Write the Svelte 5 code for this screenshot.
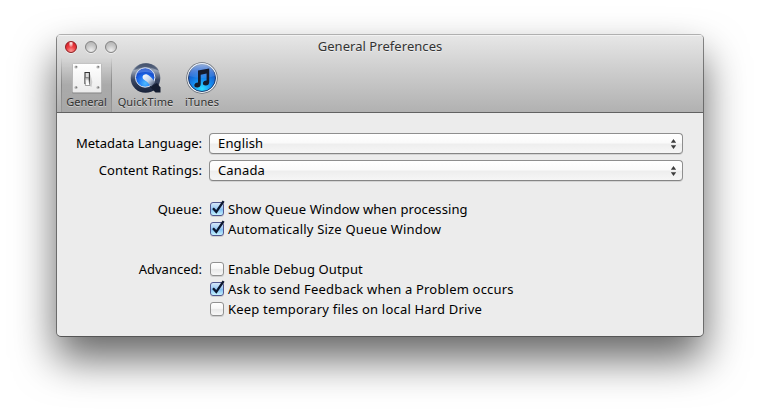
<script lang="ts">
	const popups = [
		{ label: "Metadata Language:", value: "English", tracking: 0 },
		{ label: "Content Ratings:", value: "Canada", tracking: 0.12 },
	];

	let groups = $state([
		{
			label: "Queue:",
			options: [
				{ text: "Show Queue Window when processing", tracking: 0.09, checked: true },
				{ text: "Automatically Size Queue Window", tracking: 0.18, checked: true },
			],
		},
		{
			label: "Advanced:",
			options: [
				{ text: "Enable Debug Output", tracking: 0.13, checked: false },
				{ text: "Ask to send Feedback when a Problem occurs", tracking: 0.19, checked: true },
				{ text: "Keep temporary files on local Hard Drive", tracking: 0.19, checked: false },
			],
		},
	]);

	let active = $state("General");
</script>

<div class="desktop">
	<div class="window">
		<header>
			<div class="titlebar">
				<div class="lights">
					<span class="light close"></span>
					<span class="light"></span>
					<span class="light"></span>
				</div>
				<h1>General Preferences</h1>
			</div>

			<nav>
				<button class="tool general" class:active={active === "General"} onclick={() => (active = "General")}>
					<svg width="32" height="32" viewBox="0 0 32 32">
						<defs>
							<linearGradient id="plate" x2="0" y2="1">
								<stop offset="0" stop-color="#fff" />
								<stop offset="1" stop-color="#ebebeb" />
							</linearGradient>
							<linearGradient id="lever" x2="0" y2="1">
								<stop offset="0" stop-color="#999" />
								<stop offset=".4" stop-color="#f4f4f4" />
								<stop offset="1" stop-color="#fff" />
							</linearGradient>
						</defs>
						<rect x="1" y="2" width="30" height="29.5" rx="1" fill="#777" opacity=".65" />
						<rect x="1.5" y="1.5" width="29" height="29" rx=".8" fill="url(#plate)" stroke="#b5b5b5" stroke-width=".7" />
						{#each [[5, 5], [27, 5], [5, 25.5], [27, 25.5]] as [x, y]}
							<circle cx={x} cy={y} r="1.6" fill="#b8b8b8" />
							<circle cx={x + 0.4} cy={y - 0.3} r=".8" fill="#777" />
						{/each}
						<path d="M17 23l3.5 2 .8-5-2-8z" fill="#999" opacity=".4" />
						<path d="M14 10.5h4.4v11H14z" fill="#ddd" stroke="#333" stroke-width="1.1" />
						<path d="M14 15.5h3.6l1.2 8h-4.4z" fill="url(#lever)" stroke="#666" stroke-width=".6" />
					</svg>
					<span>General</span>
				</button>
				<button class="tool quicktime" class:active={active === "QuickTime"} onclick={() => (active = "QuickTime")}>
					<svg width="32" height="32" viewBox="0 0 32 32">
						<defs>
							<linearGradient id="ring" x2="0" y2="1">
								<stop offset="0" stop-color="#56637b" />
								<stop offset=".25" stop-color="#99a4b6" />
								<stop offset=".55" stop-color="#3c4965" />
								<stop offset="1" stop-color="#172139" />
							</linearGradient>
							<radialGradient id="lens" cx=".5" cy=".8" r=".75">
								<stop offset="0" stop-color="#4dbaff" />
								<stop offset=".5" stop-color="#1c70f2" />
								<stop offset="1" stop-color="#1237b5" />
							</radialGradient>
							<linearGradient id="ray" x2="1" y2="1">
								<stop offset="0" stop-color="#fff" />
								<stop offset=".5" stop-color="#c5d4e9" />
								<stop offset="1" stop-color="#34425e" />
							</linearGradient>
						</defs>
						<circle cx="15.5" cy="16" r="14.8" fill="url(#ring)" />
						<path d="M4 8Q9 1 17 1.3Q26 2 29 9Q17 2 4 8" fill="#364562" opacity=".6" />
						<path d="M20 25l7-4 3.5 4.5v5h-5z" fill="#141d31" />
						<circle cx="15.2" cy="15.5" r="9.7" fill="url(#lens)" stroke="#e4ebf7" stroke-width="1" />
						<path d="M6.5 12Q9.5 6 15.5 6.3Q21.5 6 24 12Q15 8 6.5 12" fill="#8abaff" opacity=".4" />
						<path d="M12.5 14.8Q13 11.9 16.5 12.3Q20.5 14 25.2 20L21.2 24.4Q17.5 19.5 14 17.8Q12.4 16.6 12.5 14.8" fill="url(#ray)" />
					</svg>
					<span>QuickTime</span>
				</button>
				<button class="tool itunes" class:active={active === "iTunes"} onclick={() => (active = "iTunes")}>
					<svg width="32" height="32" viewBox="0 0 32 32">
						<defs>
							<radialGradient id="disc" cx=".5" cy=".9" r=".9">
								<stop offset="0" stop-color="#2fe0ff" />
								<stop offset=".4" stop-color="#158cf0" />
								<stop offset=".8" stop-color="#1553c4" />
								<stop offset="1" stop-color="#1c49a0" />
							</radialGradient>
							<linearGradient id="gloss" x2="0" y2="1">
								<stop offset="0" stop-color="#d4e5ff" stop-opacity=".7" />
								<stop offset="1" stop-color="#6fa7f3" stop-opacity=".2" />
							</linearGradient>
						</defs>
						<circle cx="16" cy="16" r="15.7" fill="#666c76" />
						<circle cx="16" cy="16" r="14.9" fill="#f4f7fa" />
						<circle cx="16" cy="16" r="13.5" fill="url(#disc)" stroke="#1f3b6e" stroke-width="1" />
						<path d="M3 14A13 12.5 0 0 1 29 14Q16 18 3 14" fill="url(#gloss)" />
						<path
							d="M12 8.6L23.2 6.6v13.6c0 2-1.4 3.3-3.5 3.3-1.8 0-2.8-1-2.8-2.3 0-1.6 1.5-2.8 3.7-2.8v-6.8l-5.9 1.2v9.5c0 2-1.5 3.3-3.5 3.3-1.8 0-2.9-1-2.9-2.3 0-1.7 1.6-2.8 3.7-2.8z"
							fill="#151b2b"
						/>
					</svg>
					<span>iTunes</span>
				</button>
			</nav>
		</header>

		<main>
			{#each popups as popup}
				<div class="row popup-row">
					<span class="label" style="letter-spacing: {popup.tracking}px">{popup.label}</span>
					<button class="popup">
						<span>{popup.value}</span>
						<svg width="7" height="12" viewBox="0 0 7 12">
							<path d="M3.5 .9L6.2 4.8H.8zM3.5 11.1L.8 7.2h5.4z" fill="#3c3c3c" />
						</svg>
					</button>
				</div>
			{/each}

			{#each groups as group}
				<div class="row group">
					<span class="label">{group.label}</span>
					<div class="options">
						{#each group.options as option}
							<label>
								<input type="checkbox" bind:checked={option.checked} />
								<span class="box" class:checked={option.checked}>
									{#if option.checked}
										<svg width="18" height="18" viewBox="0 0 18 18">
											<path d="M4 9.2l3.3 3.6L14.6 2.2" fill="none" stroke="#0c1730" stroke-width="2.3" />
										</svg>
									{/if}
								</span>
								<span style="letter-spacing: {option.tracking}px">{option.text}</span>
							</label>
						{/each}
					</div>
				</div>
			{/each}
		</main>
	</div>
</div>

<style>
	:global(body) {
		background: #fff;
	}

	.desktop {
		box-sizing: border-box;
		width: 760px;
		height: 415px;
		padding: 34px 0 0 56px;
		overflow: hidden;
	}

	.window {
		box-sizing: border-box;
		width: 648px;
		height: 303px;
		border: 1px solid rgba(60, 60, 60, 0.6);
		border-top-color: #b0b0b0;
		border-bottom-color: #555;
		border-radius: 5px;
		background: #ececec;
		background-clip: padding-box;
		box-shadow: 0 22px 42px rgba(0, 0, 0, 0.6);
		font-family: "Noto Sans", sans-serif;
		font-size: 13px;
		color: #000;
		overflow: hidden;
	}

	button {
		padding: 0;
		border: 0;
		background: none;
		font: inherit;
		color: inherit;
	}

	header {
		box-sizing: border-box;
		height: 78px;
		border-bottom: 1px solid #626262;
		background: linear-gradient(#e7e7e7, #cecece 45%, #b1b1b1);
		box-shadow: inset 0 1px #f3f3f3;
	}

	.titlebar {
		display: grid;
		grid-template-columns: 70px 1fr 70px;
		height: 23px;
		align-items: center;
	}

	.lights {
		display: flex;
		gap: 8px;
		padding-left: 8px;
	}

	.light {
		box-sizing: border-box;
		width: 12px;
		height: 12px;
		border: 1px solid #828282;
		border-radius: 50%;
		background: radial-gradient(circle at 50% 85%, #eee, #c5c5c5 55%, #b0b0b0);
		box-shadow: 0 1px rgba(255, 255, 255, 0.5);
	}

	.light.close {
		border-color: #8d1d20;
		background:
			radial-gradient(ellipse at 50% 12%, #fff 0, rgba(255, 210, 210, 0.7) 18%, transparent 36%),
			radial-gradient(circle at 50% 90%, #ff9b98, #ed3e42 45%, #c91520);
	}

	h1 {
		margin: 0;
		padding-bottom: 2px;
		font-size: 13px;
		font-weight: 400;
		letter-spacing: 0.05px;
		text-align: center;
		color: #333;
		line-height: 20px;
		text-shadow: 0 1px rgba(255, 255, 255, 0.5);
	}

	nav {
		display: flex;
		height: 54px;
		padding-left: 4px;
	}

	.tool {
		display: flex;
		box-sizing: border-box;
		flex-direction: column;
		align-items: center;
		padding-top: 4px;
		font-size: 11px;
		line-height: 14px;
		color: #333;
		text-shadow: 0 1px rgba(255, 255, 255, 0.4);
	}

	.tool svg {
		flex: none;
	}

	.general {
		width: 51px;
	}

	.quicktime {
		width: 67px;
		letter-spacing: 0.1px;
	}

	.itunes {
		width: 46px;
		letter-spacing: 0.1px;
	}

	.tool.active {
		border: solid rgba(90, 90, 90, 0.5);
		border-width: 0 1px;
		background: linear-gradient(rgba(0, 0, 0, 0), rgba(0, 0, 0, 0.13) 50%, rgba(0, 0, 0, 0.06));
		border-image: linear-gradient(transparent, #888 50%, #999) 1;
	}

	.tool span {
		margin-top: 1px;
	}

	main {
		padding: 20px 20px 0 0;
	}

	.row {
		display: grid;
		grid-template-columns: 145px 474px;
		column-gap: 7px;
	}

	.label {
		line-height: 21px;
		text-align: right;
		white-space: nowrap;
	}

	.popup-row {
		height: 21px;
		margin-bottom: 6px;
	}

	.popup {
		display: flex;
		box-sizing: border-box;
		width: 474px;
		height: 21px;
		align-items: center;
		justify-content: space-between;
		padding: 0 5px 0 8px;
		border: 1px solid #8e8e8e;
		border-bottom-color: #858585;
		border-radius: 4px;
		background: linear-gradient(#fff, #fafafa 45%, #eee 55%, #f6f6f6);
		box-shadow: 0 1px rgba(0, 0, 0, 0.1);
		line-height: 19px;
		letter-spacing: 0.15px;
	}

	.group {
		margin-top: 18px;
	}

	.group .label {
		line-height: 20px;
	}

	.group + .group {
		margin-top: 20px;
	}

	.options label {
		display: flex;
		height: 20px;
		align-items: center;
		gap: 4px;
		padding-left: 1px;
		line-height: 20px;
	}

	input {
		position: absolute;
		opacity: 0;
		pointer-events: none;
	}

	.box {
		position: relative;
		box-sizing: border-box;
		width: 14px;
		height: 14px;
		border: 1px solid #919191;
		border-radius: 3px;
		background: linear-gradient(#fff, #f7f7f7 45%, #e9e9e9 55%, #f8f8f8);
		box-shadow: 0 1px rgba(0, 0, 0, 0.12);
	}

	.box.checked {
		border-color: #50568f;
		background: linear-gradient(#d5e7f9, #9ccaf4 45%, #83c0f3 55%, #c7f3ff);
	}

	.box svg {
		position: absolute;
		top: -4px;
		left: -2px;
	}
</style>
